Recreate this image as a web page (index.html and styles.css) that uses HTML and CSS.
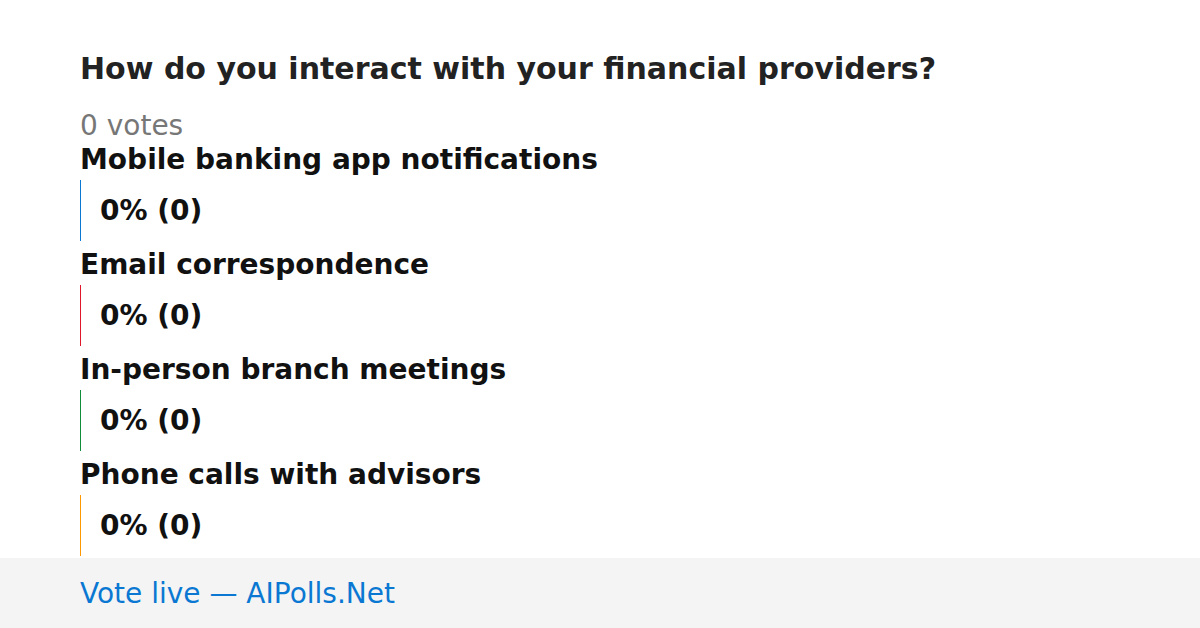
FILE: index.html
```html
<!DOCTYPE html>
<html lang="en">
  <head>
    <meta charset="UTF-8" />
    <meta name="viewport" content="width=device-width, initial-scale=1.0" />
    <title>Poll</title>
    <link rel="stylesheet" href="styles.css">
  </head>
  <body>
    <div class="poll">
      <h1 class="question">How do you interact with your financial providers?</h1>
      <div class="total">0 votes</div>

      <div class="option">
        <div class="label">Mobile banking app notifications</div>
        <div class="bar blue">0% (0)</div>
      </div>

      <div class="option">
        <div class="label">Email correspondence</div>
        <div class="bar red">0% (0)</div>
      </div>

      <div class="option">
        <div class="label">In-person branch meetings</div>
        <div class="bar green">0% (0)</div>
      </div>

      <div class="option">
        <div class="label">Phone calls with advisors</div>
        <div class="bar orange">0% (0)</div>
      </div>
    </div>

    <div class="footer">Vote live — AIPolls.Net</div>
  </body>
</html>
```

FILE: styles.css
```css
body {
  margin: 0;
  font-family: "DejaVu Sans", sans-serif;
  background: #fff;
  width: 1200px;
  height: 628px;
  overflow: hidden;
}

.poll {
  height: 558px;
  box-sizing: border-box;
  padding: 51px 80px 0 80px;
}

.question {
  margin: 0;
  font-size: 30px;
  font-weight: bold;
  color: #222;
  line-height: 36px;
}

.total {
  margin-top: 24px;
  font-size: 28px;
  color: #777;
  line-height: 30px;
}

.label {
  padding-top: 2px;
  font-size: 28px;
  font-weight: bold;
  color: #111;
  line-height: 33px;
}

.bar {
  margin-top: 4px;
  margin-bottom: 5px;
  height: 61px;
  border-left: 1px solid;
  padding-left: 19px;
  display: flex;
  align-items: center;
  font-size: 28px;
  font-weight: bold;
  color: #111;
}

.blue { border-color: #0a78d2; }
.red { border-color: #e0162b; }
.green { border-color: #108c3a; }
.orange { border-color: #ff9800; }

.footer {
  height: 70px;
  background: #f4f4f4;
  padding-left: 80px;
  display: flex;
  align-items: center;
  font-size: 28px;
  color: #0a78d2;
}
```
